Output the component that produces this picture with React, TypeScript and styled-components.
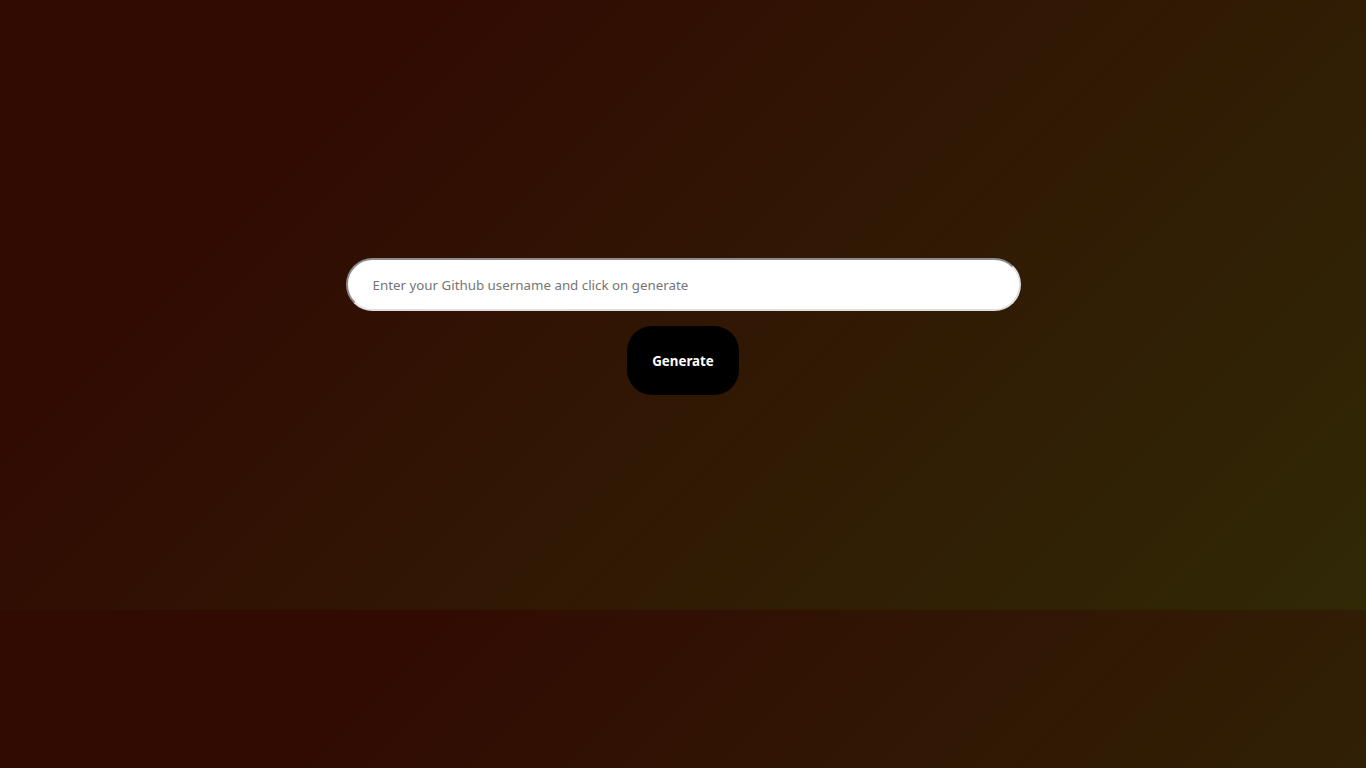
import React, { useState } from "react";
import styled, { createGlobalStyle } from "styled-components";

const GlobalStyle = createGlobalStyle`
  body {
    margin: 0;
    background: linear-gradient(135deg, #310a02 0%, #310a02 20%, #302906 100%);
  }
`;

const Page = styled.main`
  padding: 258px 8px 215px;
`;

const GeneratorForm = styled.form`
  display: flex;
  flex-direction: column;
  align-items: center;
  gap: 15px;
`;

const UsernameInput = styled.input`
  box-sizing: border-box;
  width: 50%;
  height: 53px;
  padding: 15px 25px;
  border: 2px inset #e0e0e0;
  border-radius: 50px;
  background: #fff;
  font-family: "Noto Sans", sans-serif;
`;

const GenerateButton = styled.button`
  padding: 25px 25px 24px;
  border: none;
  border-radius: 25px;
  background: #000;
  color: #fff;
  font-family: "Noto Sans", sans-serif;
  font-weight: 700;
  line-height: 20px;
  cursor: pointer;
`;

export default function App() {
  const [username, setUsername] = useState("");

  return (
    <>
      <GlobalStyle />
      <Page>
        <GeneratorForm onSubmit={(event) => event.preventDefault()}>
          <UsernameInput
            type="text"
            name="username"
            aria-label="Github username"
            placeholder="Enter your Github username and click on generate"
            value={username}
            onChange={(event) => setUsername(event.target.value)}
          />
          <GenerateButton type="submit">Generate</GenerateButton>
        </GeneratorForm>
      </Page>
    </>
  );
}
